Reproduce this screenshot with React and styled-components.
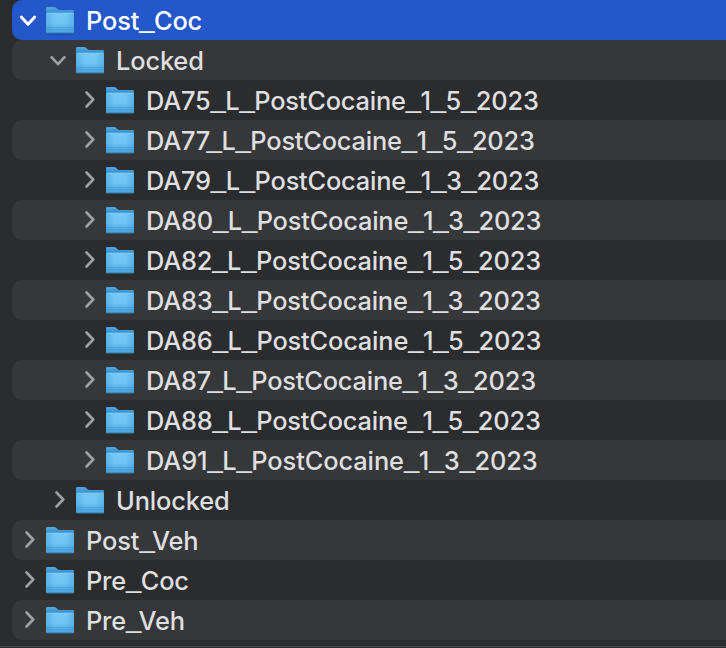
import React from 'react';
import styled, { createGlobalStyle } from 'styled-components';

const GlobalStyle = createGlobalStyle`
  * { box-sizing: border-box; }
  body { margin: 0; background: #2b2c2e; overflow: hidden; }
`;

const Browser = styled.main`
  width: 726px;
  height: 648px;
  overflow: hidden;
  background: #2b2c2e;
  font-family: Inter, sans-serif;
  font-size: 25.4px;
  font-weight: 450;
  color: #dfdfe0;
`;

const List = styled.ul`
  list-style: none;
  height: 647px;
  margin: 0;
  padding: 0 0 0 12px;
  border-bottom: 1px solid #48474a;
`;

const Row = styled.li`
  display: flex;
  align-items: center;
  height: 40px;
  padding-left: ${(p) => p.$depth * 30}px;
  border-radius: 10px 0 0 10px;
  background: ${(p) => (p.$selected ? '#2458ca' : p.$striped ? '#363739' : 'transparent')};
  color: ${(p) => (p.$selected ? '#fff' : 'inherit')};
`;

const Arrow = styled.svg`
  flex: none;
  width: 34px;
  height: 40px;
  fill: none;
  stroke: ${(p) => (p.$selected ? '#fff' : '#a0a0a2')};
  stroke-width: ${(p) => (p.$selected ? 3 : 2.6)};
  stroke-linecap: round;
  stroke-linejoin: round;
`;

const FolderArt = styled.svg`
  flex: none;
  width: 28px;
  height: 40px;
  overflow: visible;
`;

const Name = styled.span`
  margin-left: 12px;
  height: 40px;
  line-height: 42px;
  white-space: nowrap;
  letter-spacing: ${(p) => p.$tracking}px;
`;

const Underscore = styled.span`
  font-family: "Liberation Sans", sans-serif;
  font-size: 27.6px;
  line-height: 0;
  letter-spacing: 0;
  vertical-align: 3px;
  margin-left: ${(p) => (p.$tight ? -3.5 : 0)}px;
  margin-right: ${(p) => (p.$beforeV ? -2.8 : -0.6)}px;
`;

function Folder() {
  return (
    <FolderArt viewBox="0 0 28 40">
      <defs>
        <linearGradient id="back" x1="0" y1="0" x2="0" y2="1">
          <stop offset="0" stopColor="#52a8df" />
          <stop offset="0.3" stopColor="#3587c8" />
        </linearGradient>
        <linearGradient id="front" x1="0" y1="0" x2="0" y2="1">
          <stop offset="0" stopColor="#76c9f8" />
          <stop offset="0.5" stopColor="#70c4f5" />
          <stop offset="0.76" stopColor="#5db2e6" />
          <stop offset="1" stopColor="#4da2d9" />
        </linearGradient>
        <linearGradient id="edges" x1="0" y1="0" x2="1" y2="0">
          <stop offset="0" stopColor="#3f97d3" stopOpacity=".45" />
          <stop offset="0.3" stopColor="#3f97d3" stopOpacity="0" />
          <stop offset="0.7" stopColor="#3f97d3" stopOpacity="0" />
          <stop offset="1" stopColor="#3f97d3" stopOpacity=".45" />
        </linearGradient>
      </defs>
      <path d="M.5 34h27" stroke="#151b22" strokeOpacity=".4" />
      <path d="M0 8.2Q0 7 1.3 7H8q1.5 0 2.5 1.2t2.500 1.800H26.7Q28 10 28 11.3V32.5H0Z" fill="url(#back)" />
      <path d="M0 14.2Q0 12.7 1.5 12.7h25Q28 12.7 28 14.2V32q0 1.2-1.2 1.2H1.2Q0 33.2 0 32Z" fill="url(#front)" />
      <path d="M0 14.2Q0 12.7 1.5 12.7h25Q28 12.7 28 14.2V32q0 1.2-1.2 1.2H1.2Q0 33.2 0 32Z" fill="url(#edges)" />
      <path d="M1 13.4h26" stroke="#83cbf3" strokeWidth=".8" />
      <path d="M.5 27.5h27M.5 29.5h27" stroke="#3f93cd" strokeWidth=".8" opacity=".65" />
      <path d="M.8 32.7h26.4" stroke="#3484bd" strokeWidth=".8" />
    </FolderArt>
  );
}

function Label({ name, tracking }) {
  const parts = name.split('_');
  return (
    <Name $tracking={tracking}>
      {parts.map((part, i) => (
        <React.Fragment key={i}>
          {i > 0 && (
            <Underscore $tight={parts[i - 1].endsWith('7')} $beforeV={part.startsWith('V')}>_</Underscore>
          )}
          {part}
        </React.Fragment>
      ))}
    </Name>
  );
}

const entries = [
  ['Post_Coc', 0, true, -0.15],
  ['Locked', 1, true, -0.15],
  ['DA75_L_PostCocaine_1_5_2023', 2, false, -0.2],
  ['DA77_L_PostCocaine_1_5_2023', 2, false, -0.2],
  ['DA79_L_PostCocaine_1_3_2023', 2, false, -0.2],
  ['DA80_L_PostCocaine_1_3_2023', 2, false, -0.2],
  ['DA82_L_PostCocaine_1_5_2023', 2, false, -0.17],
  ['DA83_L_PostCocaine_1_3_2023', 2, false, -0.2],
  ['DA86_L_PostCocaine_1_5_2023', 2, false, -0.17],
  ['DA87_L_PostCocaine_1_3_2023', 2, false, -0.2],
  ['DA88_L_PostCocaine_1_5_2023', 2, false, -0.2],
  ['DA91_L_PostCocaine_1_3_2023', 2, false, -0.1],
  ['Unlocked', 1, false, -0.15],
  ['Post_Veh', 0, false, -0.1],
  ['Pre_Coc', 0, false, -0.2],
  ['Pre_Veh', 0, false, -0.2],
];

export default function App() {
  return (
    <Browser>
      <GlobalStyle />
      <List>
        {entries.map(([name, depth, open, tracking], i) => (
          <Row key={name} $depth={depth} $selected={i === 0} $striped={i % 2 === 1}>
            <Arrow viewBox="0 0 34 40" $selected={i === 0}>
              <path d={open ? 'M9.5 17.2L16 24.2L22.500 17.2' : 'M14.500 12.5L21.300 19.5L14.500 26.5'} />
            </Arrow>
            <Folder />
            <Label name={name} tracking={tracking} />
          </Row>
        ))}
      </List>
    </Browser>
  );
}
